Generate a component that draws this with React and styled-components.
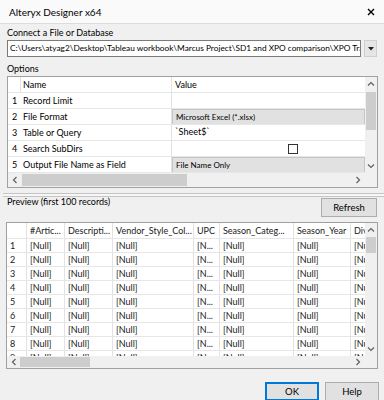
import React from 'react'
import styled, { createGlobalStyle } from 'styled-components'

const optionRows = [
  { n: 1, name: 'Record Limit', value: '', kind: 'text' },
  { n: 2, name: 'File Format', value: 'Microsoft Excel (*.xlsx)', kind: 'combo' },
  { n: 3, name: 'Table or Query', value: '`Sheet$`', kind: 'text' },
  { n: 4, name: 'Search SubDirs', value: '', kind: 'check' },
  { n: 5, name: 'Output File Name as Field', value: 'File Name Only', kind: 'combo' },
]

const previewCols = [
  { title: '', width: 20, cell: null },
  { title: '#Artic...', width: 38, cell: '[Null]' },
  { title: 'Descripti...', width: 48, cell: '[Null]' },
  { title: 'Vendor_Style_Col...', width: 81, cell: '[Null]' },
  { title: 'UPC', width: 26, cell: '[N...' },
  { title: 'Season_Categ...', width: 74, cell: '[Null]' },
  { title: 'Season_Year', width: 57, cell: '[Null]' },
  { title: 'Div', width: 60, cell: '[Null]' },
]

const GlobalStyle = createGlobalStyle`
  html, body {
    margin: 0;
    padding: 0;
    background: #f0f0f0;
  }
  body {
    font-family: Lato, "Noto Sans", sans-serif;
    font-size: 9px;
    color: #000;
  }
  * {
    box-sizing: border-box;
  }
`

const Window = styled.div`
  width: 384px;
  height: 400px;
  overflow: hidden;
  background: #f0f0f0;
  display: flex;
  flex-direction: column;
`

const TitleBar = styled.div`
  flex: none;
  height: 24px;
  display: flex;
  align-items: center;
  justify-content: space-between;
  padding: 0 9px 0 9px;
  background: #fafafa;
  border-bottom: 1px solid #dcdcdc;
  font-size: 10px;
`

const Body = styled.div`
  flex: 1;
  display: flex;
  flex-direction: column;
  padding: 2px 6px 0 7px;
`

const SectionLabel = styled.div`
  height: 14px;
  line-height: 14px;
  margin-top: ${(p) => p.$top || 0}px;
`

const PathRow = styled.div`
  display: flex;
  gap: 3px;
  height: 17px;
  margin-right: 1px;
`

const PathInput = styled.div`
  flex: 1;
  background: #fff;
  border: 1px solid #7a7a7a;
  padding: 0 2px;
  line-height: 15px;
  font-size: 8.3px;
  white-space: nowrap;
  overflow: hidden;
`

const DropButton = styled.div`
  width: 13px;
  background: #e5e5e5;
  border: 1px solid #cfcfcf;
  display: flex;
  align-items: center;
  justify-content: center;
`

const Frame = styled.div`
  height: ${(p) => p.$h}px;
  margin-left: ${(p) => p.$ml || 0}px;
  border: 1px solid #a0a0a0;
  background: #fff;
  display: grid;
  grid-template-columns: 1fr 12px;
  grid-template-rows: 1fr ${(p) => p.$sb}px;
  overflow: hidden;
`

const Content = styled.div`
  overflow: hidden;
  position: relative;
`

const OptRow = styled.div`
  display: grid;
  grid-template-columns: 13px 151px 1fr;
  height: 16px;
  border-bottom: 1px solid #e6e6e6;
`

const Cell = styled.div`
  padding-left: ${(p) => p.$pl ?? 3}px;
  line-height: 15px;
  white-space: nowrap;
  overflow: hidden;
  border-right: ${(p) => (p.$line ? '1px solid #e2e2e2' : 'none')};
`

const ValueCell = styled.div`
  padding-left: 3px;
  line-height: 14px;
  white-space: nowrap;
  overflow: hidden;
  font-size: ${(p) => (p.$combo ? '8px' : '9px')};
  background: ${(p) => (p.$combo ? '#e1e1e1' : '#fff')};
  border: ${(p) => (p.$combo ? '1px solid #c6c6c6' : 'none')};
  border-bottom: none;
  position: relative;
`

const CheckBox = styled.span`
  position: absolute;
  left: 116px;
  top: 3px;
  width: 10px;
  height: 10px;
  border: 1px solid #333;
  background: #fff;
`

const VScroll = styled.div`
  background: #f0f0f0;
  display: grid;
  grid-template-rows: 14px ${(p) => p.$thumbTop}px ${(p) => p.$thumbH}px 1fr 14px;
`

const HScroll = styled.div`
  background: #f0f0f0;
  display: grid;
  grid-template-columns: 13px ${(p) => p.$thumbLeft}px ${(p) => p.$thumbW}px 1fr 14px;
`

const Corner = styled.div`
  background: #f0f0f0;
`

const Arrow = styled.div`
  display: flex;
  align-items: center;
  justify-content: center;
`

const Thumb = styled.div`
  background: #cdcdcd;
  margin: ${(p) => (p.$vertical ? '0 1px' : '1px 0')};
`

const Splitter = styled.div`
  flex: none;
  height: 4px;
  margin: 5px -6px 0 -4px;
  border-top: 1px solid #c4c4c4;
  border-bottom: 1px solid #c4c4c4;
  background: #f7f7f7;
`

const PreviewBar = styled.div`
  display: flex;
  justify-content: space-between;
  align-items: flex-start;
  height: 25px;
`

const PreviewLabel = styled.div`
  line-height: 12px;
  margin-top: -1px;
`

const Button = styled.div`
  width: ${(p) => p.$w}px;
  height: 19px;
  margin-top: ${(p) => p.$top || 0}px;
  margin-right: ${(p) => p.$mr || 0}px;
  background: #e1e1e1;
  border: 1px solid ${(p) => (p.$primary ? '#0078d7' : '#adadad')};
  box-shadow: ${(p) => (p.$primary ? 'inset 0 0 0 1px #0078d7' : 'none')};
  display: flex;
  align-items: center;
  justify-content: center;
  font-size: 9.5px;
`

const PRow = styled.div`
  display: flex;
  height: ${(p) => p.$h}px;
  border-bottom: 1px solid #e6e6e6;
`

const PCell = styled.div`
  flex: none;
  width: ${(p) => p.$w}px;
  padding-left: 3px;
  line-height: ${(p) => p.$h - 1}px;
  white-space: nowrap;
  overflow: hidden;
  border-right: 1px solid #e2e2e2;
  color: #1a1a1a;
`

const Footer = styled.div`
  display: flex;
  justify-content: flex-end;
  gap: 6px;
  margin-top: 13px;
  margin-right: -1px;
`

const Chevron = ({ dir }) => {
  const pts = {
    up: '1,4.5 4,1.5 7,4.5',
    down: '1,1.5 4,4.5 7,1.5',
    left: '4.5,1 1.5,4 4.5,7',
    right: '1.5,1 4.5,4 1.5,7',
  }[dir]
  const horiz = dir === 'left' || dir === 'right'
  return (
    <svg width={horiz ? 6 : 8} height={horiz ? 8 : 6} viewBox={horiz ? '0 0 6 8' : '0 0 8 6'}>
      <polyline points={pts} fill="none" stroke="#606060" strokeWidth="1.2" />
    </svg>
  )
}

const VerticalBar = ({ thumbTop, thumbH }) => (
  <VScroll $thumbTop={thumbTop} $thumbH={thumbH}>
    <Arrow><Chevron dir="up" /></Arrow>
    <div />
    <Thumb $vertical />
    <div />
    <Arrow><Chevron dir="down" /></Arrow>
  </VScroll>
)

const HorizontalBar = ({ thumbLeft, thumbW }) => (
  <HScroll $thumbLeft={thumbLeft} $thumbW={thumbW}>
    <Arrow><Chevron dir="left" /></Arrow>
    <div />
    <Thumb />
    <div />
    <Arrow><Chevron dir="right" /></Arrow>
  </HScroll>
)

const App = () => {
  return (
    <Window>
      <GlobalStyle />
      <TitleBar>
        <span>Alteryx Designer x64</span>
        <svg width="8" height="8" viewBox="0 0 8 8">
          <path d="M1 1 L7 7 M7 1 L1 7" stroke="#000" strokeWidth="1.4" />
        </svg>
      </TitleBar>
      <Body>
        <SectionLabel>Connect a File or Database</SectionLabel>
        <PathRow>
          <PathInput>
            C:\Users\atyag2\Desktop\Tableau workbook\Marcus Project\SD1 and XPO comparison\XPO Tracker.xlsx
          </PathInput>
          <DropButton>
            <svg width="6" height="4" viewBox="0 0 6 4">
              <polygon points="0,0 6,0 3,3.5" fill="#222" />
            </svg>
          </DropButton>
        </PathRow>
        <SectionLabel $top={5}>Options</SectionLabel>
        <Frame $h={112} $sb={14}>
          <Content>
            <OptRow>
              <Cell $line />
              <Cell $pl={2} $line>Name</Cell>
              <Cell>Value</Cell>
            </OptRow>
            {optionRows.map((row) => (
              <OptRow key={row.n}>
                <Cell $pl={4}>{row.n}</Cell>
                <Cell $pl={2} $line>{row.name}</Cell>
                <ValueCell $combo={row.kind === 'combo'}>
                  {row.value}
                  {row.kind === 'check' && <CheckBox />}
                </ValueCell>
              </OptRow>
            ))}
          </Content>
          <VerticalBar thumbTop={1} thumbH={38} />
          <HorizontalBar thumbLeft={1} thumbW={165} />
          <Corner />
        </Frame>
        <Splitter />
        <PreviewBar>
          <PreviewLabel>Preview (first 100 records)</PreviewLabel>
          <Button $w={56} $top={1} $mr={1}>Refresh</Button>
        </PreviewBar>
        <Frame $h={147} $sb={12} $ml={-1}>
          <Content>
            <PRow $h={16}>
              {previewCols.map((col, i) => (
                <PCell key={i} $w={col.width} $h={16}>{col.title}</PCell>
              ))}
            </PRow>
            {Array.from({ length: 9 }, (_, r) => (
              <PRow key={r} $h={14}>
                {previewCols.map((col, i) => (
                  <PCell key={i} $w={col.width} $h={14}>
                    {col.cell === null ? r + 1 : col.cell}
                  </PCell>
                ))}
              </PRow>
            ))}
          </Content>
          <VerticalBar thumbTop={0} thumbH={16} />
          <HorizontalBar thumbLeft={0} thumbW={70} />
          <Corner />
        </Frame>
        <Footer>
          <Button $w={54} $primary>OK</Button>
          <Button $w={54}>Help</Button>
        </Footer>
      </Body>
    </Window>
  )
}

export default App
